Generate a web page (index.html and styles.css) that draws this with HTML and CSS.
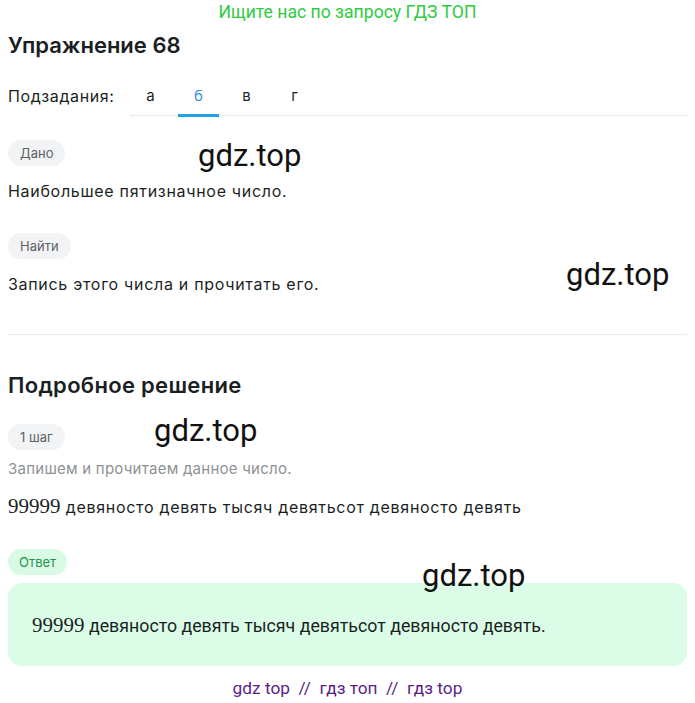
FILE: index.html
```html
<!DOCTYPE html>
<html lang="ru">
<head>
<meta charset="utf-8">
<link rel="stylesheet" href="styles.css">
</head>
<body>
<div class="page">
  <div class="promo">Ищите нас по запросу ГДЗ ТОП</div>
  <h1 class="title">Упражнение 68</h1>
  <div class="subtasks">
    <span class="subtasks-label">Подзадания:</span>
    <div class="tabs">
      <span class="tab">а</span>
      <span class="tab active">б</span>
      <span class="tab">в</span>
      <span class="tab">г</span>
    </div>
  </div>

  <section class="task">
    <span class="pill">Дано</span>
    <p class="text">Наибольшее пятизначное число.</p>
    <span class="pill">Найти</span>
    <p class="text text-last">Запись этого числа и прочитать его.</p>
  </section>

  <section class="solution">
    <h2 class="subtitle">Подробное решение</h2>
    <span class="pill">1 шаг</span>
    <p class="hint">Запишем и прочитаем данное число.</p>
    <p class="text"><span class="math">99999</span> девяносто девять тысяч девятьсот девяносто девять</p>
    <span class="pill pill-green">Ответ</span>
    <div class="answer"><span class="math">99999</span> девяносто девять тысяч девятьсот девяносто девять.</div>
  </section>

  <div class="footer">gdz top &nbsp;//&nbsp; гдз топ &nbsp;//&nbsp; гдз top</div>

  <span class="wm wm1">gdz.top</span>
  <span class="wm wm2">gdz.top</span>
  <span class="wm wm3">gdz.top</span>
  <span class="wm wm4">gdz.top</span>
</div>
</body>
</html>
```
FILE: styles.css
```css
* { box-sizing: border-box; }
html, body { margin: 0; padding: 0; background: #fff; }
body { font-family: Inter, "Noto Sans", sans-serif; color: #1b1f24; }
.page { position: relative; padding: 0 8px; }
.promo {
  font-family: Roboto, sans-serif; font-size: 17.6px; color: #2ecc40;
  text-align: center; line-height: 24px;
}
.title { font-size: 22px; font-weight: 600; margin: 6px 0 0; line-height: 30px; }
.subtasks { display: flex; align-items: flex-start; margin-top: 20px; }
.subtasks-label { font-size: 16px; letter-spacing: 0.6px; width: 122px; line-height: 20px; padding-top: 6px; }
.tabs { display: flex; gap: 7px; flex: 1; border-bottom: 1px solid #e8e8e8; }
.tab { width: 41px; text-align: center; font-size: 15px; line-height: 20px; padding: 6px 0 8px; border-bottom: 3px solid transparent; margin-bottom: -2px; }
.tab.active { color: #3d8fd6; border-bottom-color: #1ea3e6; }
.task { padding-top: 24px; padding-bottom: 39px; border-bottom: 1px solid #ececec; }
.pill {
  display: inline-block; background: #f2f3f4; color: #5d6166; font-size: 13px;
  line-height: 26px; height: 26px; padding: 0 12px; border-radius: 13px; vertical-align: top;
}
.pill-green { background: #d9fbe6; color: #23914a; padding: 0 11px; }
.text { font-size: 16px; letter-spacing: 0.7px; line-height: 22px; margin: 14px 0 31px; }
.text-last { margin-bottom: 0; }
.subtitle { font-size: 22px; letter-spacing: 0.3px; font-weight: 600; margin: 36px 0 25px; line-height: 28px; }
.hint { font-size: 15px; letter-spacing: 0.25px; color: #8d9196; margin: 8px 0 0; line-height: 22px; }
.solution .text { margin: 15px 0 31px; }
.math { font-family: "Liberation Serif", "DejaVu Serif", serif; font-size: 21px; letter-spacing: 0; }
.answer {
  background: #dbfde7; border-radius: 14px; padding: 31px 24px 30px; font-size: 17.8px;
  line-height: 22px; margin-top: 8px; font-family: Roboto, sans-serif; height: 83px;
}
.footer { text-align: center; color: #5a1f88; font-family: Roboto, sans-serif; font-size: 17.3px; margin-top: 11px; line-height: 22px; }
.wm { position: absolute; font-family: Roboto, sans-serif; font-size: 31px; color: #111; line-height: 34px; }
.wm1 { left: 198px; top: 139px; }
.wm2 { left: 566px; top: 258px; }
.wm3 { left: 154px; top: 414px; }
.wm4 { left: 422px; top: 559px; }
```
